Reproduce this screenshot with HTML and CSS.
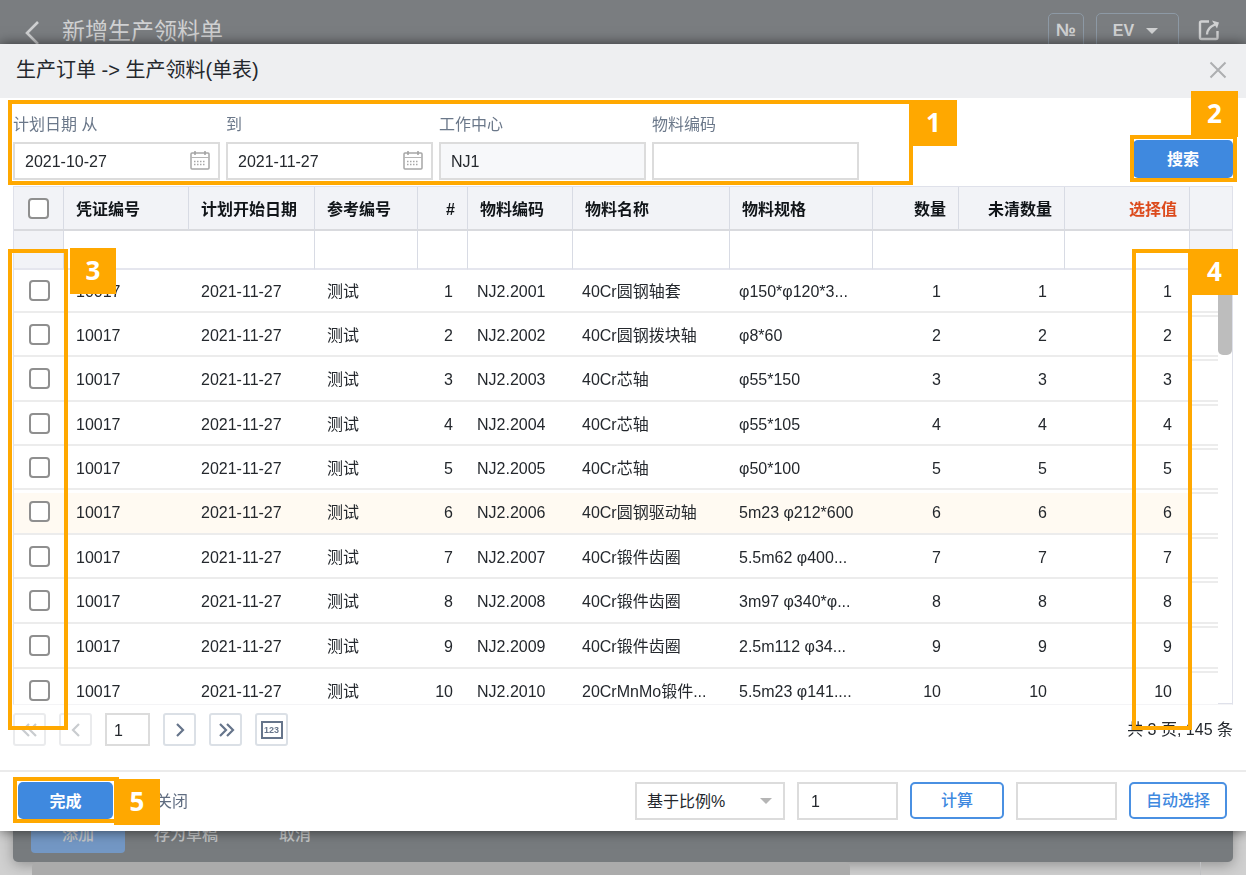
FILE: index.html
```html
<!DOCTYPE html>
<html lang="zh-CN">
<head>
<meta charset="utf-8">
<title>新增生产领料单</title>
<link rel="stylesheet" href="styles.css">
</head>
<body>
<div class="page">
  <header class="topbar">
    <button class="icon-btn back" aria-label="返回"><svg width="16" height="26" viewBox="0 0 16 26"><path d="M14 2 3 13l11 11" fill="none" stroke="#cfd0d1" stroke-width="2.6"/></svg></button>
    <h1 class="topbar-title">新增生产领料单</h1>
    <button class="top-btn numero">№</button>
    <button class="top-btn preset">EV <span class="caret"></span></button>
    <button class="icon-btn share" aria-label="打开"><svg width="22" height="22" viewBox="0 0 22 22" fill="none" stroke="#d0d1d2" stroke-width="2.4"><path d="M11 2.500H3.500Q2 2.500 2 4V18.500Q2 20 3.500 20H18Q19.500 20 19.500 18.500V12"/><path d="M9 15.500Q9 9 17 5.500"/><path d="M14 1.500 21 3.500 19 9.500Z" fill="#d0d1d2" stroke="none"/></svg></button>
  </header>
  <div class="page-body"></div>
  <div class="page-actions">
    <button class="ghost primary-ghost">添加</button>
    <button class="ghost">存为草稿</button>
    <button class="ghost">取消</button>
  </div>
  <div class="page-scroll"><div class="page-thumb"></div></div>
</div>

<section class="dialog" role="dialog" aria-labelledby="dlg-title">
  <header class="dialog-head">
    <h2 id="dlg-title">生产订单 -&gt; 生产领料(单表)</h2>
    <button class="icon-btn" aria-label="关闭窗口"><svg width="18" height="18" viewBox="0 0 18 18"><path d="M1.500 1.500l15 15M16.500 1.500l-15 15" stroke="#adafb1" stroke-width="2" fill="none"/></svg></button>
  </header>

  <form class="filters">
    <div class="frame frame-filters"></div><span class="badge badge-1">1</span>
    <div class="field"><label for="from">计划日期 从</label>
      <div class="control"><input id="from" type="text" value="2021-10-27"><svg class="cal" width="20" height="20" viewBox="0 0 20 20"><rect x="1" y="3" width="18" height="16" rx="1" fill="none" stroke="#a6a6a6" stroke-width="1.500"/><path d="M1 7.500h18" stroke="#b5b5b5"/><path d="M5 1v4M15 1v4" stroke="#a0a0a0" stroke-width="1.500"/><path d="M4 11.500h12M4 14.500h12" stroke="#a6a6a6" stroke-width="1.500" stroke-dasharray="1.500 1.500"/></svg></div></div>
    <div class="field"><label for="to">到</label>
      <div class="control"><input id="to" type="text" value="2021-11-27"><svg class="cal" width="20" height="20" viewBox="0 0 20 20"><rect x="1" y="3" width="18" height="16" rx="1" fill="none" stroke="#a6a6a6" stroke-width="1.500"/><path d="M1 7.500h18" stroke="#b5b5b5"/><path d="M5 1v4M15 1v4" stroke="#a0a0a0" stroke-width="1.500"/><path d="M4 11.500h12M4 14.500h12" stroke="#a6a6a6" stroke-width="1.500" stroke-dasharray="1.500 1.500"/></svg></div></div>
    <div class="field"><label for="wc">工作中心</label><div class="control"><input id="wc" class="readonly" type="text" value="NJ1" readonly></div></div>
    <div class="field"><label for="code">物料编码</label><div class="control"><input id="code" type="text"></div></div>
    <div class="search"><button type="button" class="btn primary">搜索</button><div class="frame frame-search"></div><span class="badge badge-2">2</span></div>
  </form>

  <div class="grid-area">
    <div class="grid">
      <table>
        <colgroup><col class="w-check"><col class="w-doc"><col class="w-date"><col class="w-ref"><col class="w-line"><col class="w-code"><col class="w-name"><col class="w-spec"><col class="w-qty"><col class="w-open"><col class="w-sel"><col class="w-end"></colgroup>
        <thead>
          <tr class="titles"><th class="check"><input type="checkbox" aria-label="全选"></th><th>凭证编号</th><th>计划开始日期</th><th>参考编号</th><th class="num">#</th><th>物料编码</th><th>物料名称</th><th>物料规格</th><th class="num">数量</th><th class="num">未清数量</th><th class="num selected-value">选择值</th><th></th></tr>
          <tr class="search-row"><td class="shade"></td><td colspan="2"></td><td></td><td></td><td></td><td></td><td></td><td colspan="2"></td><td></td><td class="shade"></td></tr>
        </thead>
        <tbody>
          <tr><td class="check"><input type="checkbox" aria-label="选择 1"></td><td>10017</td><td>2021-11-27</td><td>测试</td><td class="num">1</td><td>NJ2.2001</td><td>40Cr圆钢轴套</td><td>φ150*φ120*3...</td><td class="num">1</td><td class="num">1</td><td class="num">1</td><td></td></tr>
          <tr><td class="check"><input type="checkbox" aria-label="选择 2"></td><td>10017</td><td>2021-11-27</td><td>测试</td><td class="num">2</td><td>NJ2.2002</td><td>40Cr圆钢拨块轴</td><td>φ8*60</td><td class="num">2</td><td class="num">2</td><td class="num">2</td><td></td></tr>
          <tr><td class="check"><input type="checkbox" aria-label="选择 3"></td><td>10017</td><td>2021-11-27</td><td>测试</td><td class="num">3</td><td>NJ2.2003</td><td>40Cr芯轴</td><td>φ55*150</td><td class="num">3</td><td class="num">3</td><td class="num">3</td><td></td></tr>
          <tr><td class="check"><input type="checkbox" aria-label="选择 4"></td><td>10017</td><td>2021-11-27</td><td>测试</td><td class="num">4</td><td>NJ2.2004</td><td>40Cr芯轴</td><td>φ55*105</td><td class="num">4</td><td class="num">4</td><td class="num">4</td><td></td></tr>
          <tr><td class="check"><input type="checkbox" aria-label="选择 5"></td><td>10017</td><td>2021-11-27</td><td>测试</td><td class="num">5</td><td>NJ2.2005</td><td>40Cr芯轴</td><td>φ50*100</td><td class="num">5</td><td class="num">5</td><td class="num">5</td><td></td></tr>
          <tr class="hover"><td class="check"><input type="checkbox" aria-label="选择 6"></td><td>10017</td><td>2021-11-27</td><td>测试</td><td class="num">6</td><td>NJ2.2006</td><td>40Cr圆钢驱动轴</td><td>5m23 φ212*600</td><td class="num">6</td><td class="num">6</td><td class="num">6</td><td></td></tr>
          <tr><td class="check"><input type="checkbox" aria-label="选择 7"></td><td>10017</td><td>2021-11-27</td><td>测试</td><td class="num">7</td><td>NJ2.2007</td><td>40Cr锻件齿圈</td><td>5.5m62 φ400...</td><td class="num">7</td><td class="num">7</td><td class="num">7</td><td></td></tr>
          <tr><td class="check"><input type="checkbox" aria-label="选择 8"></td><td>10017</td><td>2021-11-27</td><td>测试</td><td class="num">8</td><td>NJ2.2008</td><td>40Cr锻件齿圈</td><td>3m97 φ340*φ...</td><td class="num">8</td><td class="num">8</td><td class="num">8</td><td></td></tr>
          <tr><td class="check"><input type="checkbox" aria-label="选择 9"></td><td>10017</td><td>2021-11-27</td><td>测试</td><td class="num">9</td><td>NJ2.2009</td><td>40Cr锻件齿圈</td><td>2.5m112 φ34...</td><td class="num">9</td><td class="num">9</td><td class="num">9</td><td></td></tr>
          <tr><td class="check"><input type="checkbox" aria-label="选择 10"></td><td>10017</td><td>2021-11-27</td><td>测试</td><td class="num">10</td><td>NJ2.2010</td><td>20CrMnMo锻件...</td><td>5.5m23 φ141....</td><td class="num">10</td><td class="num">10</td><td class="num">10</td><td></td></tr>
        </tbody>
      </table>
      <div class="track"><div class="thumb"></div></div>
    </div>
    <div class="frame frame-checks"></div><span class="badge badge-3">3</span>
    <div class="frame frame-values"></div><span class="badge badge-4">4</span>
  </div>

  <nav class="pager" aria-label="分页">
    <button class="page-btn off" aria-label="第一页"><svg width="18" height="16" viewBox="0 0 18 16"><path d="M8 2 2 8l6 6M15 2 9 8l6 6"/></svg></button>
    <button class="page-btn off" aria-label="上一页"><svg width="18" height="16" viewBox="0 0 18 16"><path d="M12 2 6 8l6 6"/></svg></button>
    <input class="page-no" type="text" value="1" aria-label="页码">
    <button class="page-btn" aria-label="下一页"><svg width="18" height="16" viewBox="0 0 18 16"><path d="M6 2l6 6-6 6"/></svg></button>
    <button class="page-btn" aria-label="最后一页"><svg width="18" height="16" viewBox="0 0 18 16"><path d="M3 2l6 6-6 6M10 2l6 6-6 6"/></svg></button>
    <button class="page-btn" aria-label="每页行数"><span class="rows-icon">123</span></button>
    <span class="total">共 3 页, 145 条</span>
  </nav>

  <footer class="dialog-foot">
    <div class="done"><button class="btn primary">完成</button><div class="frame frame-done"></div><span class="badge badge-5">5</span></div>
    <button class="close-link">关闭</button>
    <div class="select-wrap"><select aria-label="计算方式"><option>基于比例%</option></select><span class="caret"></span></div>
    <input class="foot-input" type="text" value="1" aria-label="比例">
    <button class="btn outline">计算</button>
    <input class="foot-input" type="text" aria-label="数量">
    <button class="btn outline auto">自动选择</button>
  </footer>
</section>
</body>
</html>
```

FILE: styles.css
```css
* { box-sizing: border-box; }
body {
  margin: 0;
  height: 100vh;
  overflow: hidden;
  color: #24282d;
  font: 16px/24px "Liberation Sans", "Noto Sans CJK SC", sans-serif;
}
button, input, select { font: inherit; color: inherit; margin: 0; }
button { padding: 0; border: 0; background: none; }
svg { display: block; }

/* page under the dialog */
.page { display: flex; flex-direction: column; height: 100vh; background: #d0d0d0; }
.topbar {
  display: flex;
  align-items: flex-start;
  height: 60px;
  padding: 13px 26px 0 24px;
  background: #7a7d80;
  color: #d0d1d2;
}
.topbar-title { flex: 1; margin: 0 0 0 22px; font-size: 23px; font-weight: 400; line-height: 36px; }
.back { margin-top: 7px; }
.top-btn { height: 36px; border: 1px solid #8d99a5; border-radius: 5px; font-size: 16px; }
.numero { width: 36px; margin-right: 12px; padding-bottom: 2px; font-size: 18px; font-weight: 700; }
.preset { display: flex; align-items: center; justify-content: center; gap: 12px; width: 83px; margin-right: 19px; padding-right: 4px; font-weight: 700; }
.share { margin-top: 6px; }
.caret { border: 6px solid transparent; border-top-color: currentColor; border-bottom: 0; }
.page-body { flex: 1; }
.page-actions {
  display: flex;
  align-items: flex-start;
  gap: 29px;
  height: 50px;
  margin: 0 13px;
  padding: 2px 18px;
  border-radius: 0 0 5px 5px;
  background: #777b7e;
  box-shadow: 0 3px 14px rgba(0, 0, 0, .3);
  color: #c3c5c6;
  font-weight: 500;
}
.ghost { height: 39px; padding: 2px 32px 0 0; }
.primary-ghost { width: 94px; padding: 2px 0 0; border-radius: 4px; background: #7397c4; }
.page-scroll { height: 13px; margin: 0 45px 0 32px; border-right: 1px solid #bfc0c2; }
.page-thumb { width: 70%; height: 13px; border-radius: 5px 5px 0 0; background: #ababab; }

/* dialog */
.dialog {
  position: fixed;
  inset: 44px 0;
  display: flex;
  flex-direction: column;
  background: #fff;
  box-shadow: 0 0 12px rgba(0, 0, 0, .6);
}
.dialog-head { display: flex; align-items: center; justify-content: space-between; height: 54px; padding: 0 19px 2px 16px; background: #eeeff1; }
.dialog-head h2 { margin: 0; font-size: 20px; font-weight: 400; line-height: 28px; }

.filters { position: relative; display: flex; gap: 6px; padding: 15px 13px 6px; }
.field { width: 207px; }
.field label { display: block; margin-bottom: 5px; color: #6b788a; }
.control { position: relative; }
.control input, .foot-input, .page-no, select {
  width: 100%;
  height: 38px;
  padding: 2px 10px 0;
  border: 2px solid #dcdcdc;
  border-radius: 0;
  background: #fff;
}
.control .readonly { background: #f7f8fa; }
.cal { position: absolute; right: 10px; top: 8px; }
.search { position: relative; align-self: flex-end; width: 100px; margin: 0 0 2px auto; }
.btn { height: 37px; border-radius: 5px; font-weight: 700; }
.primary { display: block; width: 100%; height: 38px; padding-top: 2px; background: #3f89df; color: #fff; }
.outline { width: 94px; border: 2px solid #4a90e2; color: #3f89df; font-weight: 500; background: #fff; }

.grid-area { position: relative; flex: 1; min-height: 0; padding: 0 13px; }
.grid { position: relative; height: 100%; overflow: hidden; border: 1px solid #dfe1ea; border-bottom-color: #f4f4f6; }
table { width: 100%; table-layout: fixed; border-collapse: separate; border-spacing: 0; }
.w-check { width: 50px; }
.w-doc { width: 125px; }
.w-date { width: 126px; }
.w-ref { width: 103px; }
.w-line { width: 50px; }
.w-code { width: 105px; }
.w-name { width: 157px; }
.w-qty { width: 86px; }
.w-open { width: 106px; }
.w-sel { width: 125px; }
.w-end { width: 42px; }
th, td { padding: 3px 0 0 9px; overflow: hidden; text-align: left; white-space: nowrap; }
.titles { height: 44px; }
th { padding: 3px 12px 0; background: #f2f3f7; border-right: 1px solid #d8dbe4; border-bottom: 2px solid #d9dade; color: #111519; }
th:last-child { border-right: 0; }
.selected-value { color: #dc4a1c; }
.search-row { height: 39px; }
.search-row td { border-right: 1px solid #d8dbe4; border-bottom: 2px solid #e5e6ee; }
.search-row td:last-child { border-right: 0; }
.search-row .shade { background: #f2f3f7; }
.num { text-align: right; }
tbody tr { height: 44px; }
tbody tr:first-child { height: 43px; }
tbody tr:nth-child(3n), tbody tr:nth-child(8) { height: 45px; }
tbody td { border-bottom: 2px solid #ececec; }
tbody td:nth-child(-n+4) { padding-left: 12px; }
tbody .num { padding: 3px 18px 0 0; }
tbody td.num:nth-child(5) { padding-right: 15px; }
tbody tr + tr td:last-child { background: linear-gradient(#fff 2px, #ececec 2px, #ececec 4px, transparent 4px); }
tbody .hover td { background: linear-gradient(#fff 3px, #fffaf2 3px); }
th.check, tbody td.check { padding: 0; text-align: center; }
.check input {
  display: block;
  appearance: none;
  width: 21px;
  height: 21px;
  margin: 0 auto;
  border: 2px solid #8f8f8f;
  border-radius: 4px;
  background: #fff;
}
.track { position: absolute; right: 0; top: 83px; bottom: 0; width: 14px; background: #fff; border-bottom: 1px solid #dfe1ea; }
.thumb { height: 85px; border-radius: 5px; background: #bdbdbd; }

.pager { display: flex; align-items: center; gap: 13px; padding: 8px 13px 24px; }
.page-btn { display: flex; align-items: center; justify-content: center; width: 33px; height: 33px; border: 2px solid #dbe0e6; border-radius: 3px; color: #66758b; }
.page-btn svg { fill: none; stroke: currentColor; stroke-width: 2.2; }
.page-btn.off { border-color: #eaebed; color: #c9cccf; }
.page-no { width: 45px; height: 33px; padding: 2px 7px 0; }
.rows-icon { width: 22px; height: 18px; border: 2px solid #66758b; font-size: 9px; font-weight: 700; line-height: 14px; }
.total { margin-left: auto; }

.dialog-foot { display: flex; align-items: flex-start; gap: 12px; padding: 10px 19px 11px 18px; border-top: 2px solid #ebebeb; }
.done { position: relative; width: 95px; }
.done .primary { height: 37px; }
.close-link { height: 37px; margin: 0 auto 0 31px; padding-top: 2px; color: #5f6c80; }
.select-wrap { position: relative; width: 150px; }
.select-wrap select { appearance: none; }
.select-wrap .caret { position: absolute; right: 13px; top: 16px; color: #b5b5b5; }
.foot-input { width: 101px; }
.dialog-foot .foot-input { padding-left: 12px; }
.auto { width: 98px; }

/* numbered callouts */
.frame { position: absolute; border: 4px solid #ffa800; pointer-events: none; z-index: 1; }
.badge {
  position: absolute;
  z-index: 2;
  width: 47px;
  height: 46px;
  background: #ffa800;
  color: #fff;
  font: 700 26px/44px "Open Sans", "Noto Sans", sans-serif;
  text-align: center;
}
.frame-filters { left: 8px; top: 2px; bottom: 1px; width: 905px; }
.badge-1 { left: 910px; top: 2px; }
.frame-search { inset: -5px -4px -4px -3px; }
.badge-2 { right: -5px; top: -49px; }
.frame-checks { left: 8px; top: 63px; bottom: -25px; width: 60px; }
.badge-3 { left: 70px; top: 62px; width: 46px; }
.frame-values { right: 54px; top: 63px; bottom: -25px; width: 60px; }
.badge-4 { right: 8px; top: 63px; }
.frame-done { inset: -5px -6px -4px -5px; }
.badge-5 { left: 96px; top: -3px; width: 46px; }
```
